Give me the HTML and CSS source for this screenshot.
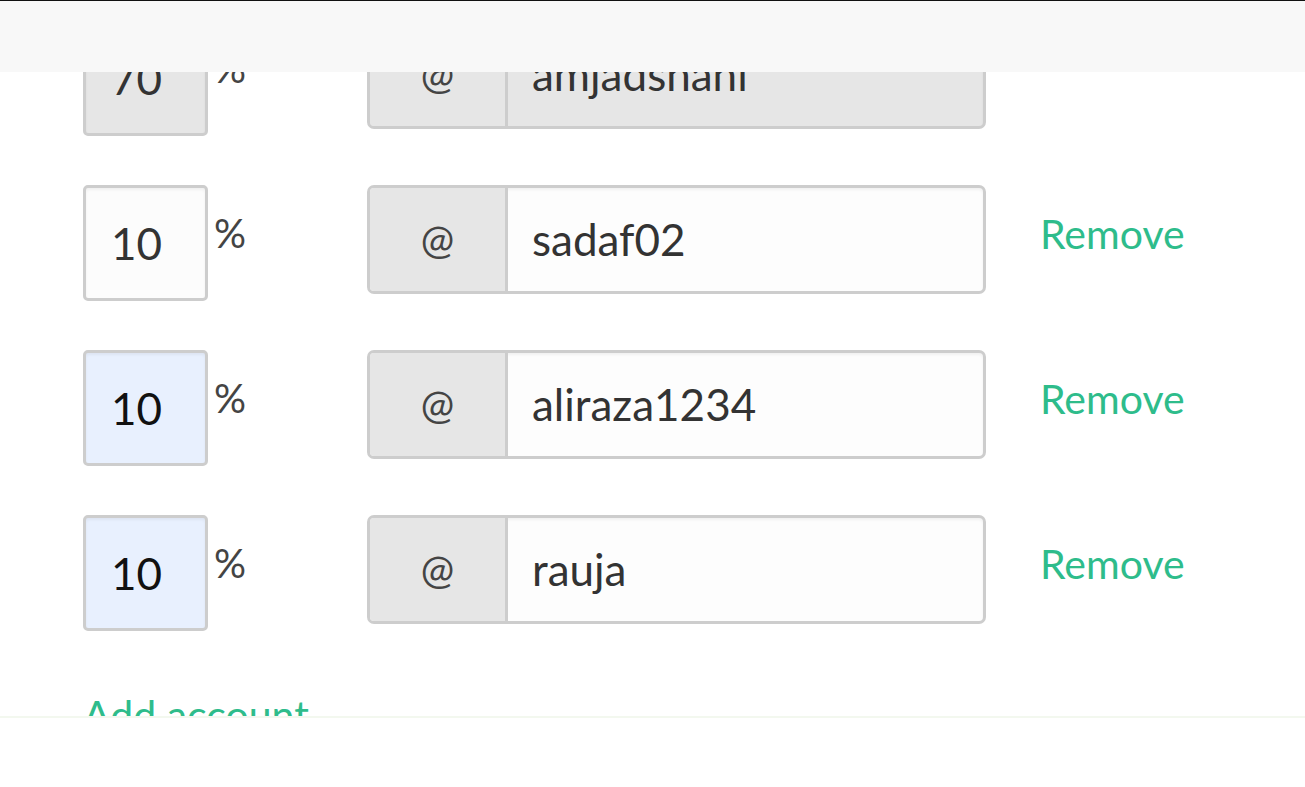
FILE: index.html
```html
<!DOCTYPE html>
<html lang="en">
<head>
  <meta charset="UTF-8">
  <meta name="viewport" content="width=device-width, initial-scale=1.0">
  <title>Split accounts</title>
  <link rel="stylesheet" href="styles.css">
</head>
<body>
  <div class="topbar"></div>

  <div class="scroller">
    <div class="accounts">
      <div class="row">
        <div class="pct-box disabled">70</div>
        <span class="pct-sign">%</span>
        <div class="handle-group disabled">
          <span class="addon">@</span>
          <span class="handle">amjadshani</span>
        </div>
      </div>

      <div class="row">
        <div class="pct-box">10</div>
        <span class="pct-sign">%</span>
        <div class="handle-group">
          <span class="addon">@</span>
          <span class="handle">sadaf02</span>
        </div>
        <a class="remove" href="#">Remove</a>
      </div>

      <div class="row">
        <div class="pct-box autofill">10</div>
        <span class="pct-sign">%</span>
        <div class="handle-group">
          <span class="addon">@</span>
          <span class="handle">aliraza1234</span>
        </div>
        <a class="remove" href="#">Remove</a>
      </div>

      <div class="row">
        <div class="pct-box autofill">10</div>
        <span class="pct-sign">%</span>
        <div class="handle-group">
          <span class="addon">@</span>
          <span class="handle">rauja</span>
        </div>
        <a class="remove" href="#">Remove</a>
      </div>

      <a class="add-account" href="#">Add account</a>
    </div>
  </div>

  <div class="footer"></div>
</body>
</html>
```

FILE: styles.css
```css
body {
  margin: 0;
  padding: 0;
  font-family: 'Lato', sans-serif;
  color: #333;
  background: #fff;
  overflow: hidden;
}

.topbar {
  height: 71px;
  border-top: 1px solid #111;
  background: #f8f8f8;
}

.scroller {
  height: 644px;
  overflow: hidden;
}

.accounts {
  margin-top: -52px;
  padding-left: 83px;
}

.row {
  display: flex;
  align-items: flex-start;
  height: 165px;
}

.pct-box {
  box-sizing: border-box;
  width: 125px;
  height: 116px;
  padding-left: 25px;
  border: 3px solid #cdcdcd;
  border-radius: 5px;
  background: #fcfcfc;
  box-shadow: inset 0 2px 3px rgba(0, 0, 0, 0.05);
  font-size: 44px;
  line-height: 110px;
  color: #333;
}

.pct-box.autofill {
  background: #e8f0fe;
  color: #111;
}

.pct-box.disabled {
  background: #e6e6e6;
}

.pct-sign {
  box-sizing: border-box;
  width: 159px;
  padding: 28px 0 0 6px;
  font-size: 40px;
  line-height: 1;
  color: #444;
}

.handle-group {
  box-sizing: border-box;
  display: flex;
  width: 619px;
  height: 109px;
  border: 3px solid #cdcdcd;
  border-radius: 7px;
  overflow: hidden;
  background: #fdfdfd;
  box-shadow: inset 0 2px 3px rgba(0, 0, 0, 0.05);
}

.addon {
  width: 135px;
  border-right: 3px solid #cdcdcd;
  background: #e6e6e6;
  text-align: center;
  font-size: 40px;
  line-height: 103px;
  color: #444;
}

.handle {
  padding-left: 24px;
  font-size: 44px;
  line-height: 103px;
  color: #333;
}

.handle-group.disabled {
  background: #e6e6e6;
}

.remove {
  margin: 24px 0 0 54px;
  font-size: 41px;
  color: #2ebc8b;
  text-decoration: none;
}

.add-account {
  display: block;
  margin-top: 10px;
  font-size: 41px;
  color: #2ebc8b;
  text-decoration: none;
}

.footer {
  height: 70px;
  border-top: 2px solid #f3f8ef;
  background: #fff;
}
```
